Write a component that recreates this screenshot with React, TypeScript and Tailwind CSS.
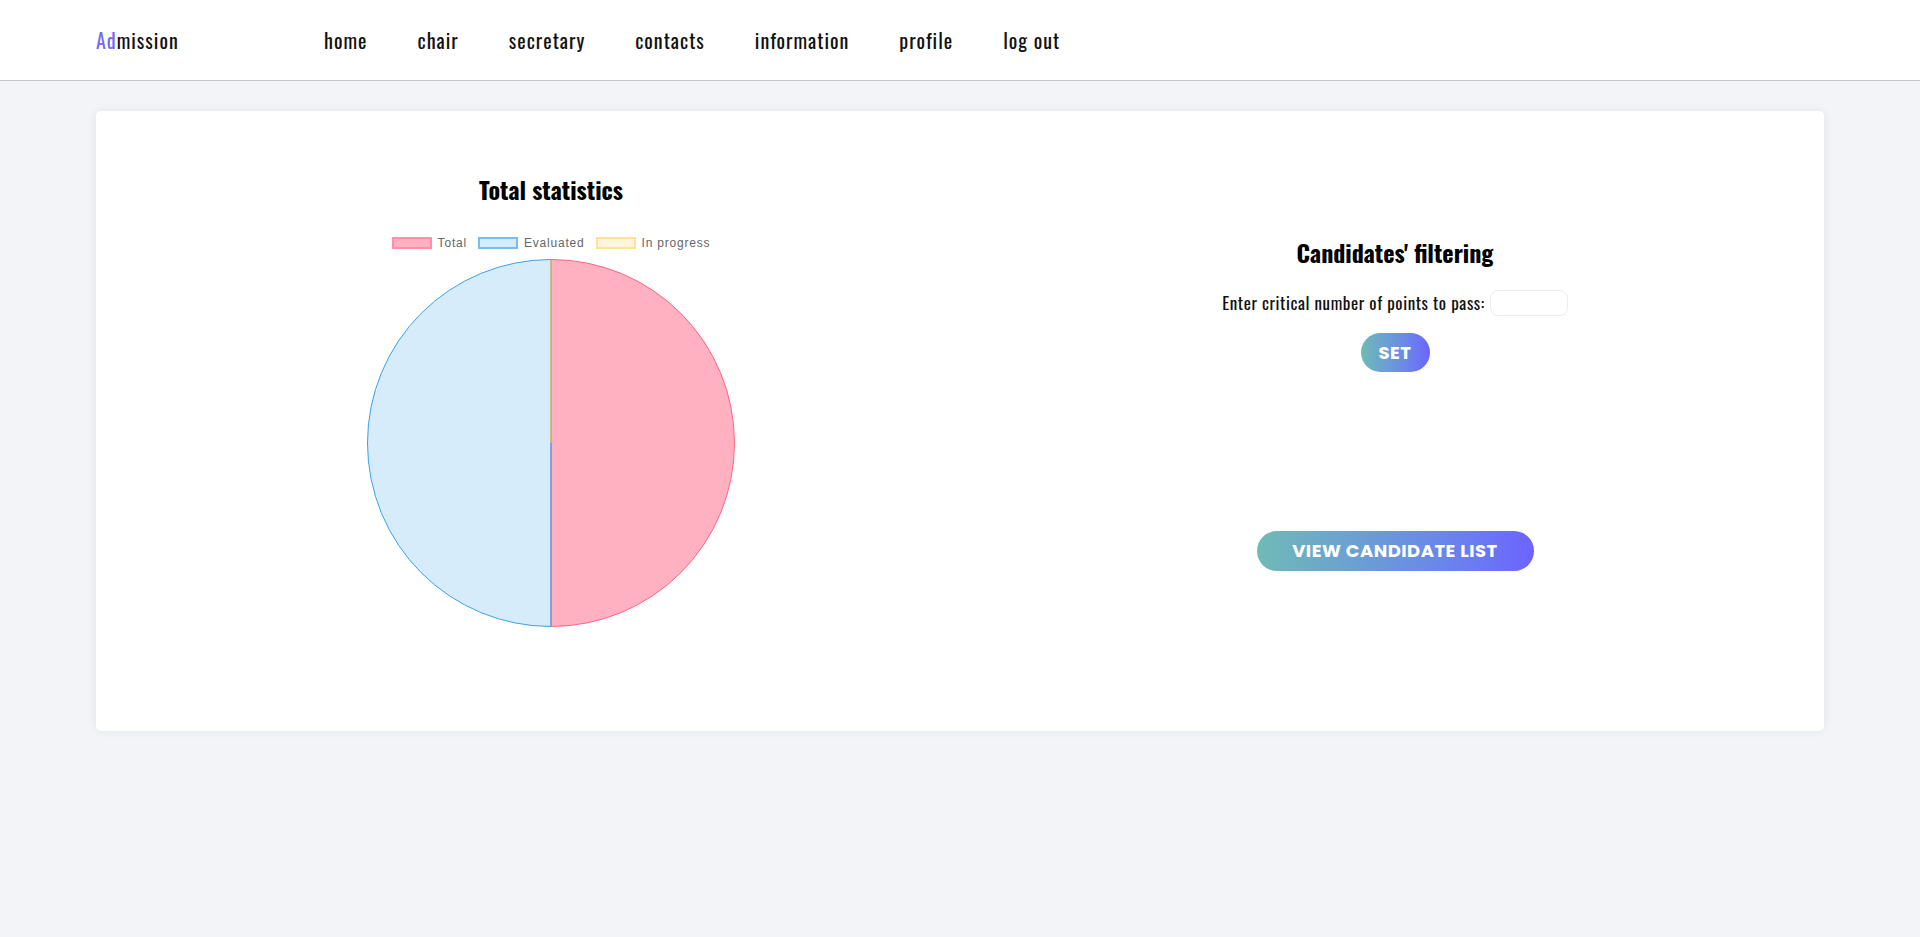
import React from "react";

function Pie() {
  const cx = 185;
  const cy = 185;
  const r = 183.5;
  return (
    <svg width="370" height="370" viewBox="0 0 370 370" className="block">
      <path
        d={`M ${cx} ${cy} L ${cx} ${cy - r} A ${r} ${r} 0 0 1 ${cx} ${cy + r} Z`}
        fill="#ffb1c1"
        stroke="#ff6384"
        strokeWidth="1"
      />
      <path
        d={`M ${cx} ${cy} L ${cx} ${cy + r} A ${r} ${r} 0 0 1 ${cx} ${cy - r} Z`}
        fill="#d7ecfb"
        stroke="#36a2eb"
        strokeWidth="1"
      />
      <line x1={cx} y1={cy} x2={cx} y2={cy + r} stroke="#7d9edb" strokeWidth="1.5" />
      <line x1={cx} y1={cy} x2={cx} y2={cy - r} stroke="#dbb868" strokeWidth="1.5" />
    </svg>
  );
}

const navItems = ["home", "chair", "secretary", "contacts", "information", "profile", "log out"];

export default function App() {
  return (
    <div className="min-h-screen bg-[#f3f4f8] font-['Oswald',sans-serif]">
      <header className="flex h-[81px] items-center border-b border-[#c3c3c3] bg-white px-[96px]">
        <div className="w-[228px] text-[20px] leading-[30px] tracking-[1px] text-[#111]">
          <span className="text-[#7268f4]">Ad</span>mission
        </div>
        <nav className="flex items-center gap-[50px]">
          {navItems.map((n) => (
            <a key={n} href="#" className="text-[20px] leading-[30px] tracking-[1px] text-[#111]">
              {n}
            </a>
          ))}
        </nav>
      </header>

      <main className="px-[96px] pt-[30px]">
        <div className="grid grid-cols-[844px_844px] rounded-[5px] bg-white pl-[33px] shadow-[0_0_10px_rgba(0,0,0,0.07)]">
          <section className="flex flex-col items-center pt-[62px] pb-[103px]">
            <h2 className="text-[24px] font-bold leading-[32px] text-black">Total statistics</h2>
            <div className="mt-[32px] flex items-center gap-[11px] font-['Liberation_Sans',Arial,sans-serif] text-[12px] leading-[12px] tracking-[0.8px] text-[#666]">
              <div className="flex items-center gap-[6px]">
                <span className="block h-[12px] w-[40px] border-2 border-[#ff8fa6] bg-[#ffb1c1]" />
                <span>Total</span>
              </div>
              <div className="flex items-center gap-[6px]">
                <span className="block h-[12px] w-[40px] border-2 border-[#76bdf0] bg-[#d7ecfb]" />
                <span>Evaluated</span>
              </div>
              <div className="flex items-center gap-[6px]">
                <span className="block h-[12px] w-[40px] border-2 border-[#ffe19a] bg-[#fff5dd]" />
                <span>In progress</span>
              </div>
            </div>
            <div className="mt-[9px]">
              <Pie />
            </div>
          </section>

          <section className="flex flex-col items-center pt-[125px]">
            <h2 className="text-[24px] font-bold leading-[32px] text-black">Candidates' filtering</h2>
            <div className="mt-[22px] flex items-center gap-[5px]">
              <span className="text-[17px] leading-[24px] tracking-[0.6px] text-[#111]">
                Enter critical number of points to pass:
              </span>
              <input
                type="text"
                className="h-[26px] w-[78px] rounded-lg border border-[#ececec] bg-white outline-none"
              />
            </div>
            <button className="mt-[17px] h-[39px] w-[69px] rounded-full bg-linear-to-r from-[#6fbab5] to-[#6c63ff] font-['Poppins',sans-serif] text-[18px] leading-[39px] font-bold tracking-[0.5px] text-white">
              SET
            </button>
            <button className="mt-[159px] h-[40px] w-[277px] rounded-full bg-linear-to-r from-[#6fbab5] to-[#6c63ff] font-['Poppins',sans-serif] text-[18px] leading-[40px] font-bold tracking-[0.5px] text-white">
              VIEW CANDIDATE LIST
            </button>
          </section>
        </div>
      </main>
    </div>
  );
}
